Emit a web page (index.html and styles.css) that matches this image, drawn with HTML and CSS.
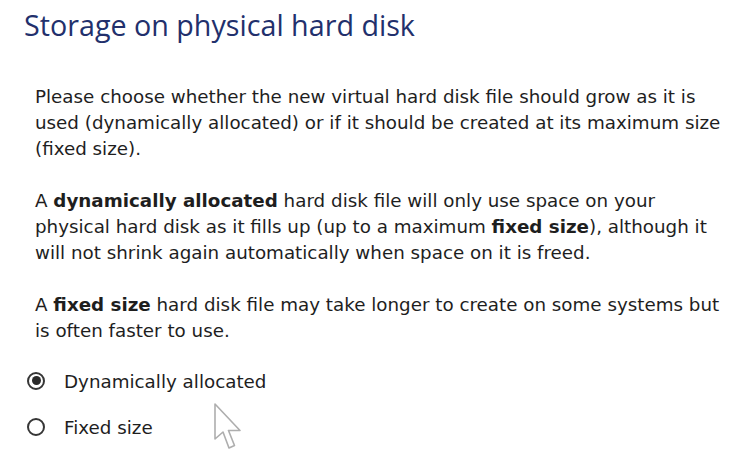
FILE: index.html
```html
<!DOCTYPE html>
<html lang="en">
<head>
<meta charset="utf-8">
<title>Storage on physical hard disk</title>
<link rel="stylesheet" href="styles.css">
</head>
<body>
<div class="page">
  <h1 class="title">Storage on physical hard disk</h1>
  <div class="content">
    <p class="para">Please choose whether the new virtual hard disk file should grow as it is<br>used (dynamically allocated) or if it should be created at its maximum size<br>(fixed size).</p>
    <p class="para">A <b>dynamically allocated</b> hard disk file will only use space on your<br>physical hard disk as it fills up (up to a maximum <b>fixed size</b>), although it<br>will not shrink again automatically when space on it is freed.</p>
    <p class="para">A <b>fixed size</b> hard disk file may take longer to create on some systems but<br>is often faster to use.</p>
    <div class="options">
      <label class="option"><span class="radio checked"></span><span class="label">Dynamically allocated</span></label>
      <label class="option"><span class="radio"></span><span class="label">Fixed size</span></label>
    </div>
  </div>
  <svg class="cursor" width="32" height="50" viewBox="0 0 32 50" aria-hidden="true">
    <path d="M2 2 L2 37 L10 30 L16 46 L21.5 43.5 L15.5 28.5 L27 28.5 Z" fill="#ffffff" stroke="#a0a0a0" stroke-width="1.6" stroke-linejoin="round"/>
  </svg>
</div>
</body>
</html>
```
FILE: styles.css
```css
html, body {
  margin: 0;
  padding: 0;
  background: #ffffff;
}
.page {
  position: relative;
  width: 740px;
  height: 476px;
  padding-top: 5px;
  box-sizing: border-box;
}
.title {
  margin: 0 0 39px 24px;
  font-family: "Open Sans", "Noto Sans", sans-serif;
  font-weight: 400;
  font-size: 28.7px;
  line-height: 40px;
  color: #22306c;
}
.content {
  padding-left: 35px;
  font-family: "DejaVu Sans", "Liberation Sans", sans-serif;
  font-size: 18.3px;
  line-height: 26px;
  color: #1e1e1e;
}
.para {
  margin: 0 0 26px 0;
  white-space: nowrap;
}
.para b {
  font-weight: 700;
}
.options {
  display: flex;
  flex-direction: column;
  gap: 20px;
  margin-top: -1px;
  margin-left: -7px;
}
.option {
  display: flex;
  align-items: center;
  gap: 19px;
  height: 26px;
}
.radio {
  flex: none;
  width: 18px;
  height: 18px;
  box-sizing: border-box;
  border: 2px solid #363636;
  border-radius: 50%;
  display: flex;
  align-items: center;
  justify-content: center;
  margin-bottom: 3px;
  margin-left: -1px;
}
.radio.checked::after {
  content: "";
  width: 9px;
  height: 9px;
  border-radius: 50%;
  background: #2a2a2a;
}
.cursor {
  position: absolute;
  left: 213px;
  top: 402px;
  opacity: 0.85;
}
```
